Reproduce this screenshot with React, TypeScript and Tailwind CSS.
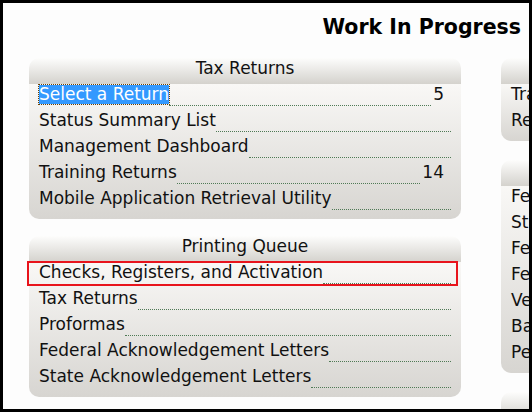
import React from "react";

type Row = { label: string; count?: string; selected?: boolean };

const taxReturns: Row[] = [
  { label: "Select a Return", count: "5", selected: true },
  { label: "Status Summary List" },
  { label: "Management Dashboard" },
  { label: "Training Returns", count: "14" },
  { label: "Mobile Application Retrieval Utility" },
];

const printingQueue: Row[] = [
  { label: "Checks, Registers, and Activation" },
  { label: "Tax Returns" },
  { label: "Proformas" },
  { label: "Federal Acknowledgement Letters" },
  { label: "State Acknowledgement Letters" },
];

const transmit: Row[] = [{ label: "Transmit Returns" }, { label: "Receive Acknowledgements" }];

const reports: Row[] = [
  { label: "Federal Acknowledgements" },
  { label: "State Acknowledgements" },
  { label: "Federal Rejects" },
  { label: "Federal Bank Products" },
  { label: "Verify Bank Deposits" },
  { label: "Bank Application Status" },
  { label: "Pending Transmissions" },
];

const Panel = ({ title, rows, children }: { title: string; rows: Row[]; children?: React.ReactNode }) => (
  <div className="relative w-[432px] shrink-0">
    <div className="h-[26px] pt-[1px] rounded-t-[10px] bg-gradient-to-b from-[#fdfdfc] to-[#d4d2cd] flex items-start justify-center text-[17px] leading-[19px] text-[#111]">
      {title}
    </div>
    <div className="rounded-b-[10px] bg-gradient-to-b from-[#f9f8f6] to-[#d7d5d1] px-[10px] pb-[5px]">
      {rows.map((row) => (
        <div key={row.label} className="flex items-start h-[26px] pt-[1px] text-[17px] leading-[19px] text-[#111] whitespace-nowrap">
          <span
            className={
              row.selected
                ? "bg-[#3399ff] text-white outline-1 outline-dotted outline-[#6b3f00]"
                : ""
            }
          >
            {row.label}
          </span>
          <div className="flex-1 h-[21px] border-b border-dotted border-[#4f7a55]" />
          {row.count && <span className="pl-[2px] pr-[7px]">{row.count}</span>}
        </div>
      ))}
    </div>
    {children}
  </div>
);

export default function App() {
  return (
    <div className="w-[532px] h-[412px] border-[3px] border-black bg-[#fdfdfd] overflow-hidden font-['DejaVu_Sans',Verdana,sans-serif]">
      <div className="h-[55px] pt-[11px] pr-[8px] text-right text-[20.5px] leading-[26px] font-bold text-black whitespace-nowrap">
        Work In Progress
      </div>
      <div className="flex gap-[40px] pl-[26px]">
        <div className="flex flex-col gap-[17px]">
          <Panel title="Tax Returns" rows={taxReturns} />
          <Panel title="Printing Queue" rows={printingQueue}>
            <div className="absolute left-[-2px] top-[25px] w-[431px] h-[25px] border-2 border-[#e8141c]" />
          </Panel>
        </div>
        <div className="flex flex-col gap-[19px]">
          <Panel title="Transmit" rows={transmit} />
          <Panel title="Reports" rows={reports} />
          <Panel title="Utilities" rows={[{ label: "Setup" }]} />
        </div>
      </div>
    </div>
  );
}
